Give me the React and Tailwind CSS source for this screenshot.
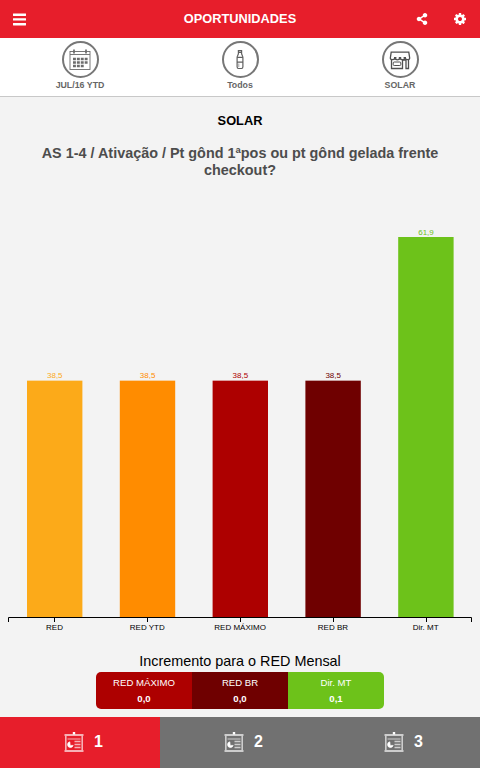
import React, { useState } from 'react';
import { FaShareAlt } from 'react-icons/fa';

const MenuIcon = () => (
  <svg width="13" height="13" viewBox="0 0 13 13" fill="currentColor">
    <rect y="0.5" width="13" height="2.4" rx="0.3" />
    <rect y="5.2" width="13" height="2.4" rx="0.3" />
    <rect y="10" width="13" height="2.4" rx="0.3" />
  </svg>
);

const CogIcon = () => (
  <svg width="12" height="12" viewBox="0 128 1536 1536" fill="currentColor">
    <path d="M1024 896q0-106-75-181t-181-75-181 75-75 181 75 181 181 75 181-75 75-181zm512-109v222q0 12-8 23t-20 13l-185 28q-19 54-39 91 35 50 107 138 10 12 10 25t-9 23q-27 37-99 108t-94 71q-12 0-26-9l-138-108q-44 23-91 38-16 136-29 186-7 28-36 28h-222q-14 0-24.5-8.5t-11.5-21.5l-28-184q-49-16-90-37l-141 107q-10 9-25 9-14 0-25-11-126-114-165-168-7-10-7-23 0-12 8-23 15-21 51-66.5t54-70.5q-27-50-41-99l-183-27q-13-2-21-12.5t-8-23.5v-222q0-12 8-23t19-13l186-28q14-46 39-92-40-57-107-138-10-12-10-24 0-10 9-23 26-36 98.5-107.5t94.5-71.5q13 0 26 10l138 107q44-23 91-38 16-136 29-186 7-28 36-28h222q14 0 24.5 8.5t11.5 21.5l28 184q49 16 90 37l142-107q9-9 24-9 13 0 25 10 129 119 165 170 7 8 7 22 0 12-8 23-15 21-51 66.5t-54 70.5q26 50 41 98l183 28q13 2 21 12.5t8 23.5z" />
  </svg>
);

const CalendarIcon = () => (
  <svg width="22" height="22" viewBox="0 0 22 22" fill="none" stroke="#6b6b6b">
    <rect x="1" y="2.5" width="20" height="18" strokeWidth="0.9" />
    <path d="M1 5.5h20" strokeWidth="0.9" />
    <path d="M5 .5v4M17 .5v4" strokeWidth="1.7" />
    <path d="M4 10h14.7M4 13.5h14.7M4 17h10.8" strokeWidth="2.4" strokeDasharray="2.9 1" />
  </svg>
);

const BottleIcon = () => (
  <svg width="22" height="22" viewBox="0 0 22 22" fill="none" stroke="#606060" strokeWidth="1.2">
    <path d="M9.4 1.5h3.2v3c0 1.3 1.3 2.3 1.3 4v9.3c0 .9-.5 1.7-1.3 1.7H9.4c-.8 0-1.3-.8-1.3-1.7V8.5c0-1.7 1.3-2.7 1.3-4z" />
    <path d="M9.3 2h3.4M9.3 3.5h3.4M8 8.3h6M8 13.2h6" />
    <path d="M9.8 14.5v3.5" strokeWidth="0.6" />
  </svg>
);

const StoreIcon = () => (
  <svg width="22" height="22" viewBox="0 0 22 22" fill="none" stroke="#505050" strokeWidth="1.3">
    <path d="M2.2 3.2h17.6l.9 6c0 1.8-3.6 2.1-4.5.2-.9 1.9-4.2 1.9-5.2 0-1 1.9-4.3 1.9-5.2 0-.9 1.9-4.5 1.6-4.5-.2z" />
    <path d="M2.5 10.5v9h11v-8.5h3.5v8.5h2.5v-9" />
    <rect x="4.2" y="13" width="7.6" height="3.5" rx="1" strokeWidth="1" />
    <path d="M5 8.8h2.4M9.8 8.8h2.4M14.6 8.8h2.4" strokeWidth="1.8" />
  </svg>
);

const BoardIcon = () => (
  <svg width="20" height="21" viewBox="0 0 20 21" fill="none" stroke="#fff" strokeOpacity="0.65">
    <path d="M.5 3h19M.5 19h19" strokeWidth="2.2" />
    <path d="M1.8 4v14M18.2 4v14" strokeWidth="1.6" />
    <path d="M3.5 7h13" strokeWidth="1" />
    <path d="M10.5 9.5h6M10.5 12.5h6M10.5 15.5h6" strokeWidth="1.4" />
    <path d="M8.8 0h2.4v2.5H8.8z" fill="#fff" stroke="none" />
    <path d="M5.8 9.8a2.9 2.9 0 1 0 3.4 3.6H6.2z" fill="#fff" strokeOpacity="0.8" strokeWidth="0.8" />
  </svg>
);

const filters = [
  { label: 'JUL/16 YTD', icon: CalendarIcon },
  { label: 'Todos', icon: BottleIcon },
  { label: 'SOLAR', icon: StoreIcon },
];

const bars = [
  { label: 'RED', value: 38.5, color: '#fcaa19' },
  { label: 'RED YTD', value: 38.5, color: '#ff8c00' },
  { label: 'RED MÁXIMO', value: 38.5, color: '#ad0000' },
  { label: 'RED BR', value: 38.5, color: '#6f0000' },
  { label: 'Dir. MT', value: 61.9, color: '#6dc21a' },
];

const increments = [
  { label: 'RED MÁXIMO', value: '0,0', className: 'bg-[#ad0000]' },
  { label: 'RED BR', value: '0,0', className: 'bg-[#6f0000]' },
  { label: 'Dir. MT', value: '0,1', className: 'bg-[#6dc21a]' },
];

const BarChart = () => {
  const step = 92.8;
  const base = 417;

  return (
    <svg width="480" height="440" className="block shrink-0">
      {bars.map((bar, i) => {
        const center = 54.8 + i * step;
        const height = (bar.value / 61.9) * 380;
        return (
          <g key={bar.label} fontSize="8" textAnchor="middle">
            <rect x={center - 27.8} y={base - height} width="55.4" height={height} fill={bar.color} />
            <text x={center} y={base - height - 2.5} fill={bar.color}>
              {bar.value.toFixed(1).replace('.', ',')}
            </text>
            <path d={`M${Math.floor(center)}.5 417v5`} stroke="#000" />
            <text x={center - 0.3} y="430" fill="#000">{bar.label}</text>
          </g>
        );
      })}
      <path d="M8.5 422v-4.5h463v4.5" fill="none" stroke="#000" strokeWidth="1" />
    </svg>
  );
};

const App = () => {
  const [page, setPage] = useState(1);

  return (
    <div className="w-[480px] h-[768px] flex flex-col overflow-hidden bg-[#f3f3f3] font-['Liberation_Sans',Arial,sans-serif]">
      {/* Header */}
      <header className="h-[38px] shrink-0 grid grid-cols-[1fr_auto_1fr] items-center bg-[#e71e2b] text-white px-[13px]">
        <button aria-label="Menu" className="justify-self-start">
          <MenuIcon />
        </button>
        <h1 className="text-[12.8px] font-bold">OPORTUNIDADES</h1>
        <div className="flex items-center justify-end gap-[26px] pb-px pr-px">
          <FaShareAlt size={12} />
          <CogIcon />
        </div>
      </header>

      {/* Filters */}
      <div className="h-[59px] shrink-0 grid grid-cols-3 bg-white border-b border-[#c8c8c8] pt-[3px]">
        {filters.map(({ label, icon: Icon }) => (
          <button key={label} className="flex flex-col items-center">
            <span className="size-[37px] rounded-full border-2 border-[#777] flex items-center justify-center">
              <Icon />
            </span>
            <span className="mt-px text-[8.8px] leading-[12px] font-bold text-[#666]">{label}</span>
          </button>
        ))}
      </div>

      {/* Chart */}
      <main className="flex-1 flex flex-col items-center">
        <h2 className="mt-[16px] text-[12.8px] leading-4 font-bold text-black">SOLAR</h2>
        <p className="mt-[16px] h-[55px] px-8 text-[14.4px] leading-[17px] font-bold text-center text-[#4d4d4d]">
          AS 1-4 / Ativação / Pt gônd 1ªpos ou pt gônd gelada frente checkout?
        </p>
        <BarChart />
        <h3 className="mt-[13px] text-[14.4px] leading-[17px] text-black">Incremento para o RED Mensal</h3>
        <div className="mt-[2px] w-[288px] h-[37px] grid grid-cols-3 rounded-[5px] overflow-hidden text-white text-center text-[9.6px]">
          {increments.map((item) => (
            <div key={item.label} className={item.className}>
              <div className="pt-[3px] leading-4">{item.label}</div>
              <div className="leading-4 font-bold">{item.value}</div>
            </div>
          ))}
        </div>
      </main>

      {/* Pages */}
      <nav className="h-[51px] shrink-0 grid grid-cols-3 text-white text-base font-bold">
        {[1, 2, 3].map((n) => (
          <button
            key={n}
            onClick={() => setPage(n)}
            className={`flex items-center justify-center gap-[10px] pl-[7px] pb-px ${page === n ? 'bg-[#e71e2b]' : 'bg-[#717171]'}`}
          >
            <BoardIcon />
            <span>{n}</span>
          </button>
        ))}
      </nav>
    </div>
  );
};

export default App;
